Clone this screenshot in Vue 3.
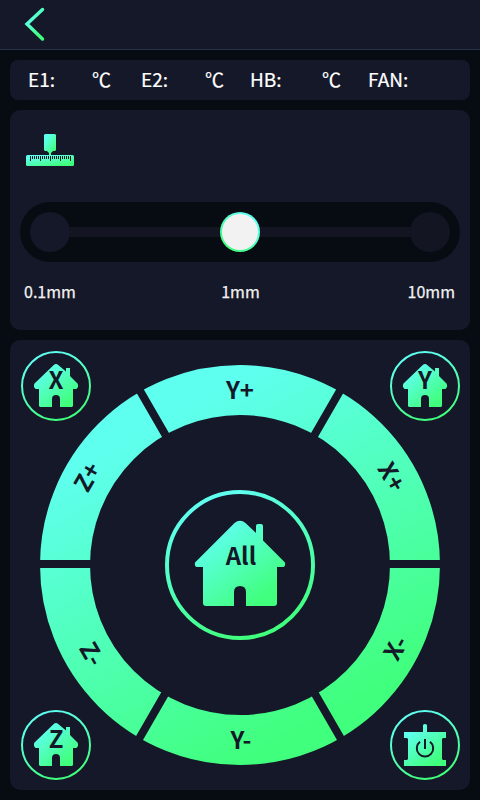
<script setup>
const temps = [
  { label: 'E1:', unit: '℃', cls: 'e1' },
  { label: 'E2:', unit: '℃', cls: 'e2' },
  { label: 'HB:', unit: '℃', cls: 'hb' },
  { label: 'FAN:', unit: '', cls: 'fan' },
]
const ticks = Array.from({ length: 21 }, (_, i) => ({ x: 4 + i * 2, h: i % 5 === 0 ? 5 : 3 }))
const sectors = [
  { t: 'Y+', x: 230, y: 50, r: 0 },
  { t: 'X+', x: 381.5, y: 137, r: 60 },
  { t: 'X-', x: 386, y: 308, r: -60 },
  { t: 'Y-', x: 231, y: 400.5, r: 0 },
  { t: 'Z-', x: 81.5, y: 314, r: 60 },
  { t: 'Z+', x: 77.5, y: 137, r: -60 },
]
const homes = ['X', 'Y', 'Z']
</script>

<template>
  <main class="screen">
    <svg class="defs" width="0" height="0">
      <defs>
        <linearGradient id="mint" x1="0.2" y1="0.12" x2="0.8" y2="0.88">
          <stop offset="0" stop-color="#5ffff0" />
          <stop offset="1" stop-color="#40ff7c" />
        </linearGradient>
        <linearGradient id="ring" gradientUnits="userSpaceOnUse" x1="150" y1="75" x2="315" y2="380">
          <stop offset="0" stop-color="#5ffff0" />
          <stop offset="1" stop-color="#40ff7c" />
        </linearGradient>
        <linearGradient id="outline" x1="0.3" y1="0" x2="0.7" y2="1">
          <stop offset="0.05" stop-color="#5ffff0" />
          <stop offset="0.95" stop-color="#40ff7c" />
        </linearGradient>
      </defs>
    </svg>

    <header class="topbar">
      <svg class="back" width="24" height="36" viewBox="0 0 24 36">
        <path d="M19.500 3.500 4 18 19.500 33" fill="none" stroke="url(#mint)" stroke-width="3.400" stroke-linecap="round" />
      </svg>
    </header>

    <section class="card temps">
      <div v-for="t in temps" :key="t.label" class="temp" :class="t.cls">
        <span>{{ t.label }}</span><span>{{ t.unit }}</span>
      </div>
    </section>

    <section class="card step">
      <svg class="ruler" width="48" height="34" viewBox="0 0 48 34">
        <path d="M19 0h10l1 1v15l-1 1h-2l-2 2v2h-2v-2l-2-2h-2l-1-1V1z" fill="url(#mint)" />
        <rect y="21" width="48" height="11" rx="1.500" fill="url(#mint)" />
        <rect v-for="k in ticks" :key="k.x" :x="k.x" y="22" width="1" :height="k.h" fill="#151828" />
      </svg>
      <div class="slider">
        <span class="stop"></span><span class="line"></span>
        <span class="knob"></span>
        <span class="line"></span><span class="stop"></span>
      </div>
      <div class="labels"><span>0.1mm</span><span>1mm</span><span>10mm</span></div>
    </section>

    <section class="card pad">
      <svg class="dial" width="460" height="450" viewBox="0 0 460 450">
        <circle cx="230" cy="225" r="175" fill="none" stroke="url(#ring)" stroke-width="50" />
        <g stroke="#151828" stroke-width="8">
          <path d="M20 224H440" />
          <path d="M120 33.470 340 414.530M340 33.470 120 414.530" />
        </g>
        <text v-for="s in sectors" :key="s.t" class="axis" :transform="`translate(${s.x} ${s.y}) rotate(${s.r})`" y="8.500">{{ s.t }}</text>
        <circle cx="230" cy="225" r="73" fill="none" stroke="url(#outline)" stroke-width="4" />
        <path fill="url(#mint)" d="M224.500 183q5.500-4.500 11 0L246 193v-7q0-2 2-2h3q2 0 2 2v14.500L274.500 222q1 1 .5 3 0 2-2 2H267v36q0 3-3 3H236V252q0-6-6-6t-6 6v14H196q-3 0-3-3V227H187q-2 0-2-2-.5-2 .5-3z" />
        <text class="axis" x="231" y="225">All</text>
      </svg>
      <svg v-for="h in homes" :key="h" class="corner" width="70" height="70" viewBox="0 0 70 70">
        <circle cx="35" cy="35" r="34" fill="none" stroke="url(#outline)" stroke-width="2" />
        <path fill="url(#mint)" d="M32.500 14.200q2.500-2.400 5 0L45 20.500V17h4v8L56.500 32.500q.5.500.5 2v1.500l-1.500 2H52V55l-1 1H39V48q0-4-4-4t-4 4v8H19l-1-1V38H14.500L13 36V34.500q0-1.500.5-2z" />
        <text class="axis" x="35" y="38">{{ h }}</text>
      </svg>
      <svg class="corner" width="70" height="70" viewBox="0 0 70 70">
        <circle cx="35" cy="35" r="34" fill="none" stroke="url(#outline)" stroke-width="2" />
        <path fill="url(#mint)" d="M33 22V15q2-2 4 0v7H56v6H53l-1 1V49l1 1h3v6H14V50h3l1-1V29l-1-1H14V22z" />
        <path d="M30 31.800a8.200 8.200 0 1 0 10 0M35 29v10" fill="none" stroke="#151828" stroke-width="2" />
      </svg>
    </section>
  </main>
</template>

<style>
body { margin: 0; background: #070b12; }
</style>

<style scoped>
.screen {
  width: 480px;
  height: 800px;
  display: flex;
  flex-direction: column;
  background: #070b12;
  color: #fff;
  font-family: "Noto Sans CJK SC", sans-serif;
  overflow: hidden;
}
.defs { position: absolute; }
.topbar {
  height: 50px;
  box-sizing: border-box;
  padding: 6px 0 0 23px;
  background: #151828;
  border-bottom: 1px solid #29314b;
}
.back { display: block; }
.card {
  margin: 10px 10px 0;
  background: #151828;
  border-radius: 10px;
  box-sizing: border-box;
}
.temps {
  height: 40px;
  border-radius: 8px;
  display: flex;
  font-size: 19px;
  line-height: 37px;
  padding-left: 18px;
  -webkit-text-stroke: 0.2px #fff;
}
.temp { display: flex; justify-content: space-between; }
.e1, .e2 { width: 83px; margin-right: 30px; }
.e2 { margin-right: 26px; }
.hb { width: 91px; margin-right: 27px; }
.step {
  height: 220px;
  display: flex;
  flex-direction: column;
  padding: 24px 10px 0;
}
.ruler { display: block; margin-left: 6px; }
.slider {
  height: 60px;
  margin-top: 34px;
  padding: 0 10px;
  box-sizing: border-box;
  border-radius: 30px;
  background: #070b12;
  display: flex;
  align-items: center;
}
.stop { width: 40px; height: 40px; border-radius: 50%; background: #131622; }
.stop:first-child { background: #151828; }
.line { flex: 1; height: 10px; margin: 0 -1px; background: #131622; }
.knob {
  width: 40px;
  height: 40px;
  box-sizing: border-box;
  border: 2px solid transparent;
  border-radius: 50%;
  background: linear-gradient(#f2f2f2, #f2f2f2) padding-box,
    linear-gradient(215deg, #5ffff0 20%, #40ff7c 85%) border-box;
  z-index: 1;
}
.labels {
  display: grid;
  grid-template-columns: 1fr 1fr 1fr;
  margin-top: 17px;
  padding: 0 5px 0 4px;
  font-size: 16px;
  line-height: 24px;
  color: #f2f2f2;
  -webkit-text-stroke: 0.25px #f2f2f2;
}
.labels span:nth-child(2) { text-align: center; padding-left: 2px; }
.labels span:nth-child(3) { text-align: right; }
.pad {
  position: relative;
  height: 450px;
  padding: 11px 10px 10px 11px;
  display: grid;
  grid-template-columns: 70px 70px;
  justify-content: space-between;
  align-content: space-between;
}
.dial { position: absolute; left: 0; top: 0; }
.corner { position: relative; display: block; }
.axis {
  font-size: 24px;
  font-weight: 700;
  fill: #151828;
  text-anchor: middle;
}
</style>
